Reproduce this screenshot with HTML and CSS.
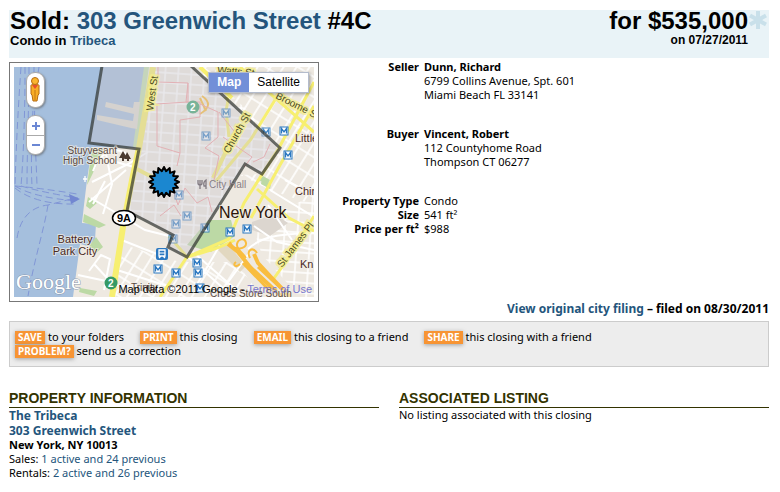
FILE: index.html
```html
<!DOCTYPE html>
<html lang="en">
<head>
<meta charset="utf-8">
<title>303 Greenwich Street #4C</title>
<link rel="stylesheet" href="styles.css">
</head>
<body>
<main class="page">
  <header class="banner">
    <div>
      <h1 class="headline">Sold: <a href="#">303 Greenwich Street</a> #4C</h1>
      <p class="subline">Condo in <a href="#">Tribeca</a></p>
    </div>
    <div class="price">
      <p class="headline">for $535,000<span class="star" aria-hidden="true"><svg viewBox="0 0 20 20"><path d="M10 1v18M2 5.500l16 9M18 5.500l-16 9"/></svg></span></p>
      <p class="dateline">on 07/27/2011</p>
    </div>
  </header>

  <section class="summary">
    <div class="map-frame">
      <div class="map">
        <svg class="map-art" viewBox="14 67 300 230" role="img" aria-label="Map of Tribeca">
          <defs>
            <pattern id="blocks" width="13" height="10" patternUnits="userSpaceOnUse" patternTransform="rotate(4)">
              <path d="M0 1H13M1 0V10" stroke="#fff" stroke-width="1.500"/>
            </pattern>
            <pattern id="slant" width="11" height="17" patternUnits="userSpaceOnUse" patternTransform="rotate(32)">
              <path d="M0 1H11M1 0V17" stroke="#fff" stroke-width="1.600"/>
            </pattern>
            <g id="metro">
              <rect x="-4" y="-4" width="8" height="8" fill="#fff" stroke="#2b78c0"/>
              <path d="M-2.500 2.500V-2.500L0 1 2.500-2.500V2.500" fill="none" stroke="#2b78c0" stroke-width="1.300"/>
            </g>
          </defs>
          <rect x="14" y="67" width="300" height="230" fill="#eee9e1"/>
          <path d="M150 67H200L245 108 280 148 262 174 245 164 187 257 168 247 173 235 128 211 139 149Z" fill="url(#blocks)"/>
          <path d="M198 67H314V205L270 190 240 175 262 174 280 148Z" fill="url(#slant)"/>
          <path d="M124 245L180 262 236 262 262 297H113Z" fill="url(#slant)"/>
          <path d="M252 225L314 195V297H300L262 255Z" fill="url(#blocks)"/>
          <path class="water" d="M14 67H146L134 148 92 147 87 180 84 205 82 223 96 224 95 240 88 246 80 244 73 297H14Z"/>
          <path d="M144 67H149L138 147H133Z" fill="#c4dfb0"/>
          <path d="M92 148L104 149 92 175 87 185ZM84 214L106 225 99 228 83 222ZM96 237L103 247 96 253 89 246ZM80 288L97 291 94 296 79 292ZM88 197L97 203 90 209 86 206ZM208 220L231 220 235 236 211 252 187 245ZM262 178L271 184 270 189 261 184ZM263 176L270 180 267 185 259 180Z" fill="#bcd9a5"/>
          <path d="M252 222L275 214 288 223 270 236 252 230Z" fill="#dcd6cf"/>
          <path d="M216 248L228 244 246 266 240 272Z" fill="#e2d8c0"/>
          <path d="M106 102L133 108 134 102 140 102 137 129 131 128 97 120 97 115 133 121 134 114 105 107Z" fill="#dedbd0"/>
          <g class="ferry">
            <path d="M21 67C18 110 16 150 15 186M25 67C25 105 24 150 21 186M29 67C29 105 27 150 27 186M34 67C34 105 30 150 32 186M39 67C31 110 36 145 37 186M15 186Q35 198 78 201M15 186Q40 188 77 194M15 188Q36 205 76 204M21 186Q45 193 78 198M17 238Q22 208 48 205L75 198M48 205C44 230 35 256 28 296"/>
            <path d="M69 194L80 199 71 204Z" fill="#7287d1" stroke="none"/>
          </g>
          <g class="lane">
            <path d="M92 182L128 164 148 152M106 154L112 184 103 214M91 198L145 230 169 236M102 158L134 167 128 204M93 171C100 150 118 147 127 154M89 202L126 170M93 204L105 181M89 271L101 255 110 259 104 290M94 264L108 279M78 275L106 281M119 239L162 256M113 285L160 289M117 270L180 290M187 256L232 296M193 252L242 295M220 245L196 286M248 249C262 236 280 234 314 233M250 252L226 285M254 226L277 242 314 250M268 205L292 240M270 190L314 217M285 180L314 195"/>
          </g>
          <g class="road">
            <path d="M153 67L139 148 132 180 123 227 112 297" stroke-width="6"/>
            <path d="M133 167L154 178" stroke-width="4"/>
            <path d="M200 67L232 98M239 125L213 178" stroke-width="4"/>
            <path d="M314 82L280 146 244 203 229 239 187 257 160 297M275 100L251 139 216 181M225 99Q230 95 226 110L229 137M314 106L280 165 251 218M240 67L314 132M257 189L289 218 314 231M314 216L287 260 272 281M187 257C212 250 222 247 235 240M169 236L187 257" stroke-width="3"/>
          </g>
          <g class="highway">
            <path d="M228 244L238 252 250 267 282 297M254 254L258 263 270 276 290 297" stroke-width="4"/>
            <path d="M243 263L270 291M258 267L286 293" stroke-width="3"/>
            <path d="M230 242C234 252 247 249 246 243S238 239 237 244 242 252 246 258M236 262C232 265 236 268 240 264M250 258C246 250 253 246 257 253" stroke-width="2"/>
            <path d="M202 96Q215 105 200 114M200 98L206 111" stroke-width="2"/>
          </g>
          <path class="parcel" d="M158 67V82L188 83V102L156 104M188 83L186 102H200V117L180 120V153M200 104L218 112V137L205 148 219 156 214 180M157 104V146L180 153 177 166M219 112L237 135M223 137L252 157 244 167M270 144L264 157 253 162M173 190L178 205 185 188 197 203 208 197 212 212M160 216L174 205 181 216"/>
          <g opacity=".85">
            <use href="#metro" x="226" y="113"/><use href="#metro" x="206" y="136"/><use href="#metro" x="266" y="132"/><use href="#metro" x="179" y="195"/><use href="#metro" x="187" y="216"/><use href="#metro" x="176" y="224"/><use href="#metro" x="173" y="239"/><use href="#metro" x="205" y="228"/>
          </g>
          <path class="district" d="M102 66L89 143 139 149 127 211 173 235 168 247 187 257 245 164 262 174 280 148 191 66"/>

          <use href="#metro" x="284" y="131"/><use href="#metro" x="288" y="155"/><use href="#metro" x="230" y="232"/><use href="#metro" x="247" y="229"/><use href="#metro" x="197" y="263"/><use href="#metro" x="176" y="273"/><use href="#metro" x="198" y="273"/><use href="#metro" x="158" y="269"/><use href="#metro" x="200" y="288"/>
          <rect x="156" y="248" width="12" height="12" rx="2" fill="#2b78c0"/>
          <path d="M159 250H165V256H159ZM159 258L161 256M165 258L163 256" fill="none" stroke="#fff" stroke-width="1.300"/>
          <path d="M159 253H165" stroke="#fff"/>
          <g class="route"><circle cx="193" cy="107" r="6.500" fill="#78b398"/><text x="190" y="111">2</text><circle cx="111" cy="283" r="6.500" fill="#359966"/><text x="108" y="287">2</text></g>
          <ellipse cx="124" cy="218" rx="11.500" ry="7.500" fill="#fff" stroke="#000" stroke-width="1.500"/>
          <text class="shield" x="124" y="222">9A</text>
          <path d="M123 151L119 158H122V161H124V158H127ZM127 152L124 159H127V161H129V159H131Z" fill="#4a3a30"/>
          <path d="M198 180V183Q198 185 200 185V189M202 180V183Q202 185 200 185V180M206 189V180Q203 182 204 186H206" fill="none" stroke="#827b82" stroke-width="1.300"/>
          <path d="M83 179H87M85 176V182" stroke="#fff" stroke-width="1.300"/>

          <g class="place">
            <text x="117" y="154" text-anchor="end">Stuyvesant</text>
            <text x="117" y="164" text-anchor="end">High School</text>
            <text x="209" y="188" class="muted">City Hall</text>
            <text x="210" y="297">Crocs Store South</text>
            <text x="131" y="291">Trinity</text>
          </g>
          <g class="area">
            <text x="75" y="243" text-anchor="middle">Battery</text>
            <text x="75" y="255" text-anchor="middle">Park City</text>
            <text x="295" y="142">Little</text>
            <text x="295" y="195">Chin</text>
            <text x="300" y="268">Kn</text>
          </g>
          <text class="city" x="219" y="218">New York</text>
          <g class="street">
            <text transform="translate(153 111) rotate(-82)">West St</text>
            <text transform="translate(229 154) rotate(-61)">Church St</text>
            <text transform="translate(217 73) rotate(5)">Watts St</text>
            <text transform="translate(275 98) rotate(27)">Broome St</text>
            <text transform="translate(282 268) rotate(-53)">St James Pl</text>
          </g>
          <path class="pin" transform="translate(164 182)" d="M15 0L10.800 2.100 13.900 5.700 9.100 6.100 10.600 10.600 6.100 9.100 5.700 13.900 2.100 10.800 0 15 -2.100 10.800 -5.700 13.900 -6.100 9.100 -10.600 10.600 -9.100 6.100 -13.900 5.700 -10.800 2.100 -15 0 -10.800 -2.100 -13.900 -5.700 -9.100 -6.100 -10.600 -10.600 -6.100 -9.100 -5.700 -13.900 -2.100 -10.800 0 -15 2.100 -10.800 5.700 -13.900 6.100 -9.100 10.600 -10.600 9.100 -6.100 13.900 -5.700 10.800 -2.100Z"/>
          <text class="logo" x="16" y="289">Google</text>
        </svg>
        <button class="pegman" type="button" aria-label="Street view">
          <svg viewBox="0 0 16 28"><path d="M4 11Q3 8 8 8T12 11V18L11 19 10 25H6L5 19 4 18Z" fill="#f8ad25" stroke="#b56b13"/><path d="M5 9L8 13 11 9Z" fill="#e8502d"/><path d="M8 14V24" stroke="#c47714"/><circle cx="8" cy="5" r="3.500" fill="#fbb62e" stroke="#b56b13"/></svg>
        </button>
        <div class="zoom">
          <button type="button" aria-label="Zoom in"><svg viewBox="0 0 10 10"><path d="M1 5H9M5 1V9"/></svg></button>
          <button type="button" aria-label="Zoom out"><svg viewBox="0 0 10 10"><path d="M1 5H9"/></svg></button>
        </div>
        <div class="map-type">
          <button class="active" type="button">Map</button>
          <button type="button">Satellite</button>
        </div>
        <p class="credit">Map data ©2011 Google - <a href="#">Terms of Use</a></p>
      </div>
    </div>

    <dl class="facts">
      <dt>Seller</dt>
      <dd><strong>Dunn, Richard</strong><br>6799 Collins Avenue, Spt. 601<br>Miami Beach FL 33141</dd>
      <dt class="group">Buyer</dt>
      <dd class="group"><strong>Vincent, Robert</strong><br>112 Countyhome Road<br>Thompson CT 06277</dd>
      <dt class="group">Property Type</dt>
      <dd class="group">Condo</dd>
      <dt>Size</dt>
      <dd>541 ft²</dd>
      <dt>Price per ft²</dt>
      <dd>$988</dd>
    </dl>
  </section>

  <p class="filing"><a href="#">View original city filing</a> – filed on 08/30/2011</p>

  <ul class="actions">
    <li><a href="#">SAVE</a> to your folders</li>
    <li><a href="#">PRINT</a> this closing</li>
    <li><a href="#">EMAIL</a> this closing to a friend</li>
    <li><a href="#">SHARE</a> this closing with a friend</li>
    <li><a href="#">PROBLEM?</a> send us a correction</li>
  </ul>

  <div class="columns">
    <section>
      <h2>PROPERTY INFORMATION</h2>
      <p class="building"><a href="#">The Tribeca</a><br><a href="#">303 Greenwich Street</a></p>
      <p><strong>New York, NY 10013</strong></p>
      <p>Sales: <a href="#">1 active and 24 previous</a></p>
      <p>Rentals: <a href="#">2 active and 26 previous</a></p>
    </section>
    <section>
      <h2>ASSOCIATED LISTING</h2>
      <p>No listing associated with this closing</p>
    </section>
  </div>
</main>
</body>
</html>
```
FILE: styles.css
```css
* { box-sizing: border-box; }
body { margin: 0; background: #fff; color: #000; font: 11px/14px "Noto Sans", "Open Sans", sans-serif; }
h1, h2, p, dl, dd, ul { margin: 0; padding: 0; }
a { color: #24557c; text-decoration: none; }
button { border: 0; padding: 0; background: none; font: inherit; cursor: pointer; }
svg { display: block; }

.page { padding: 10px 11px 12px 9px; }

.banner { display: flex; justify-content: space-between; height: 48px; padding: 0 21px 0 1px; background: #e9f3f7; font-family: "Liberation Sans", Arial, sans-serif; font-weight: bold; }
.headline { font-size: 24px; line-height: 22px; font-weight: bold; }
.subline { font-size: 13px; line-height: 18px; }
.price { text-align: right; }
.price .headline { position: relative; }
.dateline { font-size: 12px; line-height: 17px; }
.star { position: absolute; left: 100%; top: 0; width: 20px; }
.star path { fill: none; stroke: #c9e0ea; stroke-width: 4; }

.summary { display: flex; }
.map-frame { flex: none; margin-top: 4px; border: 1px solid #777; padding: 4px; }
.map { position: relative; width: 300px; overflow: hidden; font-family: "Liberation Sans", Arial, sans-serif; }
.map-art { width: 100%; }
.water { fill: #a5bfdd; }
.ferry { fill: none; stroke: #8196d6; stroke-dasharray: 7 4; }
.lane { fill: none; stroke: #fff; stroke-width: 2; }
.road { fill: none; stroke: #f7ef70; }
.highway { fill: none; stroke: #f9bd3f; }
.parcel { fill: none; stroke: #f4a3a5; }
.district { fill: #c9c5cc; fill-opacity: .4; stroke: #2e322e; stroke-opacity: .7; stroke-width: 3; }
.route { font-size: 10px; font-weight: bold; }
.route text { fill: #fff; }
.shield { font-size: 11px; font-weight: bold; text-anchor: middle; }
.place, .area, .street, .city { paint-order: stroke; stroke: #f3efe8; stroke-width: 2; stroke-opacity: .7; fill: #5b4a42; }
.place { font-size: 10px; }
.place .muted { fill: #888085; stroke: none; }
.area { font-size: 11px; fill: #4b2a1e; }
.city { font-size: 16px; fill: #2b1409; }
.street { font-size: 10px; fill: #4a4a20; stroke: #f5ee8a; stroke-width: 4; }
.pin { fill: #1b87d0; stroke: #000; stroke-width: 2; stroke-linejoin: round; }
.logo { font: 22px "Liberation Serif", serif; fill: #fff; stroke: #8c9ab0; stroke-width: 1; paint-order: stroke; }

.pegman, .zoom { position: absolute; left: 12px; width: 19px; border: 1px solid #aaa; border-radius: 9px; background: #fff; box-shadow: 1px 1px 2px #5558; }
.pegman { top: 5px; height: 36px; }
.pegman svg { width: 16px; height: 28px; }
.zoom { top: 48px; overflow: hidden; }
.zoom button { display: flex; align-items: center; justify-content: center; width: 100%; height: 19px; }
.zoom button + button { border-top: 1px solid #aaa; }
.zoom svg { width: 10px; }
.zoom path { stroke: #6b87d4; stroke-width: 2; }
.map-type { position: absolute; top: 5px; right: 5px; display: flex; border: 1px solid #b4bccc; background: #fff; box-shadow: 1px 1px 3px #5558; font-size: 12px; line-height: 19px; }
.map-type button { padding: 0 8px; }
.map-type .active { background: #728fd8; color: #fff; font-weight: bold; }
.credit { position: absolute; right: 2px; bottom: 0; font-size: 11px; line-height: 15px; white-space: nowrap; }
.credit a { color: #7777cc; }

.facts { flex: 1; display: grid; grid-template-columns: 100px 1fr; column-gap: 5px; align-content: start; margin-top: 2px; }
.facts dt { text-align: right; font-weight: bold; }
.facts .group { margin-top: 25px; }

.filing { text-align: right; font-size: 12px; font-weight: bold; }

.actions { display: flex; flex-wrap: wrap; column-gap: 16px; margin-top: 5px; padding: 8px 130px 8px 5px; border: 1px solid #ccc; background: #ededed; list-style: none; }
.actions a { display: inline-block; padding: 0 3px; background: #f79433; color: #fff; font-size: 10px; line-height: 13px; font-weight: bold; box-shadow: 0 1px 4px #777a; }

.columns { display: grid; grid-template-columns: 1fr 1fr; gap: 20px; margin-top: 23px; }
h2 { border-bottom: 1px solid #330; color: #330; font: bold 14px/17px "Liberation Sans", Arial, sans-serif; }
.building { font-size: 12px; line-height: 15px; font-weight: bold; }
```
